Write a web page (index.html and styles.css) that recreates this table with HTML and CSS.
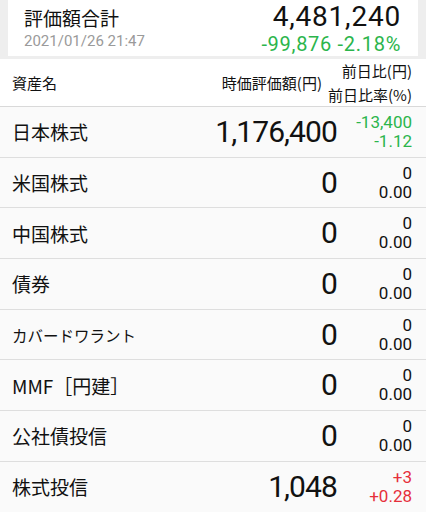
FILE: index.html
```html
<!DOCTYPE html>
<html lang="ja">
<head>
<meta charset="utf-8">
<link rel="stylesheet" href="styles.css">
</head>
<body>
<div class="summary">
  <div class="card">
    <div class="card-left">
      <div class="title">評価額合計</div>
      <div class="date">2021/01/26 21:47</div>
    </div>
    <div class="card-right">
      <div class="total">4,481,240</div>
      <div class="change minus">-99,876 -2.18%</div>
    </div>
  </div>
</div>
<div class="head">
  <div class="h-name">資産名</div>
  <div class="h-value">時価評価額(円)</div>
  <div class="h-diff">
    <div>前日比(円)</div>
    <div>前日比率(%)</div>
  </div>
</div>
<div class="list">
  <div class="row"><div class="name">日本株式</div><div class="value">1,176,400</div><div class="diff minus"><div>-13,400</div><div>-1.12</div></div></div>
  <div class="row"><div class="name">米国株式</div><div class="value">0</div><div class="diff"><div>0</div><div>0.00</div></div></div>
  <div class="row"><div class="name">中国株式</div><div class="value">0</div><div class="diff"><div>0</div><div>0.00</div></div></div>
  <div class="row"><div class="name">債券</div><div class="value">0</div><div class="diff"><div>0</div><div>0.00</div></div></div>
  <div class="row"><div class="name small">カバードワラント</div><div class="value">0</div><div class="diff"><div>0</div><div>0.00</div></div></div>
  <div class="row"><div class="name">MMF［円建］</div><div class="value">0</div><div class="diff"><div>0</div><div>0.00</div></div></div>
  <div class="row"><div class="name">公社債投信</div><div class="value">0</div><div class="diff"><div>0</div><div>0.00</div></div></div>
  <div class="row"><div class="name">株式投信</div><div class="value">1,048</div><div class="diff plus"><div>+3</div><div>+0.28</div></div></div>
</div>
</body>
</html>
```
FILE: styles.css
```css
* { box-sizing: border-box; }
html, body { margin: 0; padding: 0; }
body {
  width: 426px;
  height: 512px;
  overflow: hidden;
  background: #fafafa;
  font-family: Roboto, "Noto Sans CJK JP", sans-serif;
  color: #111111;
}
.summary {
  background: #eeeeee;
  padding: 0 8px 3px;
}
.card {
  background: #ffffff;
  height: 56px;
  padding: 0 17px 0 16px;
  display: flex;
  justify-content: space-between;
}
.card-left { display: flex; flex-direction: column; }
.title {
  font-size: 19px;
  line-height: 22px;
  margin-top: 7px;
  font-family: "Noto Sans CJK JP", sans-serif;
}
.date {
  font-size: 15px;
  line-height: 18px;
  margin-top: 3px;
  color: #9a9a9a;
}
.card-right { display: flex; flex-direction: column; align-items: flex-end; }
.total {
  font-size: 28px;
  line-height: 33px;
  letter-spacing: 0.8px;
}
.change {
  font-size: 20px;
  line-height: 23px;
  letter-spacing: 0.7px;
}
.minus { color: #2bb54c; }
.plus { color: #e62f3b; }
.head {
  background: #ffffff;
  height: 48px;
  border-bottom: 1px solid #d9d9d9;
  display: flex;
  align-items: center;
  padding: 0 14px 0 12px;
  font-size: 15px;
  font-family: "Noto Sans CJK JP", sans-serif;
  white-space: nowrap;
}
.h-name { flex: 1; }
.h-value { margin-right: 6px; }
.h-diff {
  display: flex;
  flex-direction: column;
  align-items: flex-end;
  line-height: 24px;
  min-width: 84px;
}
.row {
  height: 50.7px;
  border-bottom: 1px solid #dedede;
  display: flex;
  align-items: center;
  padding: 0 14px 0 12px;
}
.name {
  flex: 1;
  font-size: 19px;
  font-family: "Noto Sans CJK JP", sans-serif;
}
.name.small { font-size: 15.5px; }
.value {
  font-size: 30px;
  line-height: 34px;
  letter-spacing: -0.9px;
}
.diff {
  width: 75px;
  display: flex;
  flex-direction: column;
  align-items: flex-end;
  font-size: 17px;
  line-height: 19px;
}
```
